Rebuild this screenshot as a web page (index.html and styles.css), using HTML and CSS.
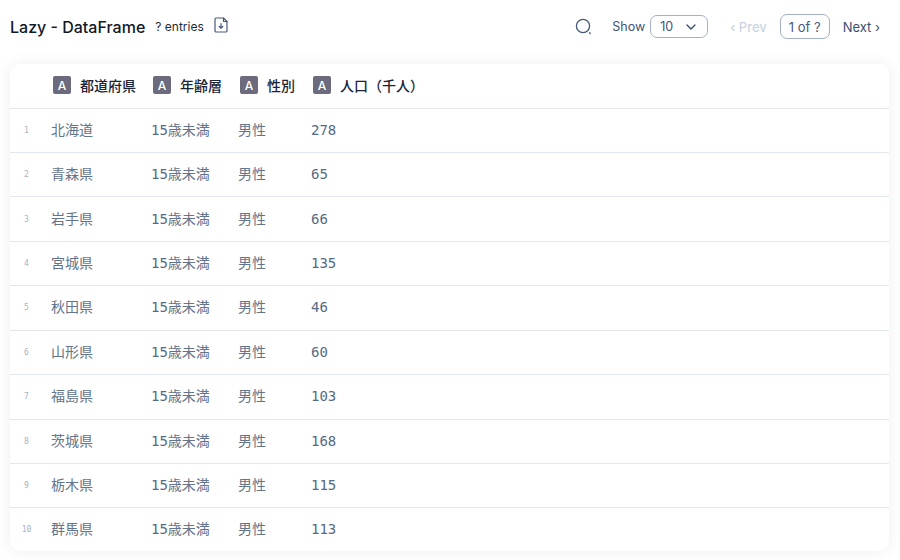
FILE: index.html
```html
<!DOCTYPE html>
<html lang="ja">
<head>
<meta charset="utf-8">
<title>Lazy - DataFrame</title>
<link rel="stylesheet" href="styles.css">
</head>
<body>
<div class="toolbar">
  <div class="heading">
    <span class="title">Lazy - DataFrame</span>
    <span class="entries">? entries</span>
    <svg class="download" width="14" height="16" viewBox="0 0 14 16" fill="none" stroke="#475a78" stroke-width="1.2" stroke-linecap="round" stroke-linejoin="round"><path d="M9.5 1H2.2A1.2 1.2 0 0 0 1 2.2v11.6A1.2 1.2 0 0 0 2.2 15h9.6a1.2 1.2 0 0 0 1.2-1.2V4.5z"/><path d="M9.5 1v3.5H13"/><path d="M7 6.5v4.5M5.2 9.5 7 11.2l1.8-1.7"/></svg>
  </div>
  <div class="controls">
    <svg class="search" width="17" height="17" viewBox="0 0 17 17" fill="none" stroke="#475a78" stroke-width="1.3" stroke-linecap="round"><circle cx="8" cy="8" r="6.6"/><path d="M14.6 14.8l.6.7"/></svg>
    <div class="show">
      <span>Show</span>
      <div class="select"><span>10</span><svg width="10" height="6" viewBox="0 0 10 6" fill="none" stroke="#334766" stroke-width="1.3" stroke-linecap="round" stroke-linejoin="round"><path d="M1 1l4 4 4-4"/></svg></div>
    </div>
    <div class="pager">
      <span class="prev"><span class="chev">‹</span> Prev</span>
      <span class="page">1 of ?</span>
      <span class="next">Next <span class="chev">›</span></span>
    </div>
  </div>
</div>
<div class="card">
  <table class="frame">
    <thead>
      <tr><th class="idx"></th><th class="tight"><span class="col"><span class="badge">A</span>都道府県</span></th><th><span class="col"><span class="badge">A</span>年齢層</span></th><th><span class="col"><span class="badge">A</span>性別</span></th><th class="last"><span class="col"><span class="badge">A</span>人口（千人）</span></th></tr>
    </thead>
    <tbody>
      <tr><td class="idx">1</td><td>北海道</td><td><span class="num">15</span>歳未満</td><td>男性</td><td class="num">278</td></tr>
      <tr><td class="idx">2</td><td>青森県</td><td><span class="num">15</span>歳未満</td><td>男性</td><td class="num">65</td></tr>
      <tr><td class="idx">3</td><td>岩手県</td><td><span class="num">15</span>歳未満</td><td>男性</td><td class="num">66</td></tr>
      <tr><td class="idx">4</td><td>宮城県</td><td><span class="num">15</span>歳未満</td><td>男性</td><td class="num">135</td></tr>
      <tr><td class="idx">5</td><td>秋田県</td><td><span class="num">15</span>歳未満</td><td>男性</td><td class="num">46</td></tr>
      <tr><td class="idx">6</td><td>山形県</td><td><span class="num">15</span>歳未満</td><td>男性</td><td class="num">60</td></tr>
      <tr><td class="idx">7</td><td>福島県</td><td><span class="num">15</span>歳未満</td><td>男性</td><td class="num">103</td></tr>
      <tr><td class="idx">8</td><td>茨城県</td><td><span class="num">15</span>歳未満</td><td>男性</td><td class="num">168</td></tr>
      <tr><td class="idx">9</td><td>栃木県</td><td><span class="num">15</span>歳未満</td><td>男性</td><td class="num">115</td></tr>
      <tr class="end"><td class="idx">10</td><td>群馬県</td><td><span class="num">15</span>歳未満</td><td>男性</td><td class="num">113</td></tr>
    </tbody>
  </table>
</div>
</body>
</html>
```
FILE: styles.css
```css
* { box-sizing: border-box; }
html, body { height: 100%; }
body {
  margin: 0;
  padding: 0 11px 0 10px;
  background: #fff;
  font-family: Inter, "Noto Sans CJK JP", sans-serif;
  color: #475a78;
  overflow: hidden;
}
.toolbar {
  height: 64px;
  padding-bottom: 11px;
  display: flex;
  align-items: center;
  justify-content: space-between;
}
.heading { display: flex; align-items: center; }
.title { font-size: 16px; font-weight: 500; color: #111827; }
.entries { margin-left: 10px; font-size: 12px; color: #1f2937; }
.download { margin-left: 10px; margin-top: -3px; }
.controls { display: flex; align-items: center; font-size: 13px; margin-right: 10px; }
.search { margin-right: 20px; }
.show { display: flex; align-items: center; gap: 5px; color: #41557a; font-size: 12.5px; }
.select {
  width: 58px;
  height: 23px;
  border: 1px solid #a3b1c6;
  border-radius: 7px;
  padding: 0 11px 0 9px;
  display: flex;
  align-items: center;
  justify-content: space-between;
  font-size: 12.5px;
}
.pager { display: flex; align-items: center; margin-left: 22px; }
.prev { color: #cbd5e1; font-weight: 500; }
.page {
  margin-left: 13px;
  height: 25px;
  padding: 0 8px;
  border: 1px solid #a3b1c6;
  border-radius: 7px;
  display: flex;
  align-items: center;
  font-size: 13px;
}
.next { margin-left: 13px; margin-right: -1px; color: #3b4f6e; }
.chev { font-size: 13px; }
.card {
  background: #fff;
  border-radius: 10px;
  box-shadow: 0 0 16px rgba(15, 23, 42, 0.07);
  overflow: hidden;
}
.frame { width: 100%; border-collapse: collapse; font-size: 14px; }
.frame th {
  height: 44px;
  padding: 0 8px 1px;
  text-align: left;
  font-weight: 500;
  color: #1b2436;
  white-space: nowrap;
  border-bottom: 1px solid #e2e7f0;
}
.frame th.tight { padding-right: 7px; }
.frame td {
  height: 44.45px;
  padding: 0 8px 3px;
  white-space: nowrap;
  color: #64748b;
  border-bottom: 1px solid #e2e7f0;
}
.frame td.num { padding-bottom: 1px; color: #566a85; }
.frame .end td { height: 43.5px; border-bottom: 0; }
.frame th.idx, .frame td.idx { width: 33px; min-width: 33px; padding: 0; text-align: center; }
.frame td.idx { font-family: "DejaVu Sans Mono", monospace; font-size: 8px; color: #a8b2c0; }
.frame th.last { width: 100%; }
.num { font-family: "DejaVu Sans Mono", monospace; font-size: 14px; color: #566a85; }
.col { display: flex; align-items: center; padding-left: 2px; }
.badge {
  width: 18px;
  height: 18px;
  margin-right: 9px;
  background: #6b6b7d;
  border-radius: 2px;
  color: #fff;
  font-size: 12px;
  font-weight: 500;
  display: flex;
  align-items: center;
  justify-content: center;
}
```
